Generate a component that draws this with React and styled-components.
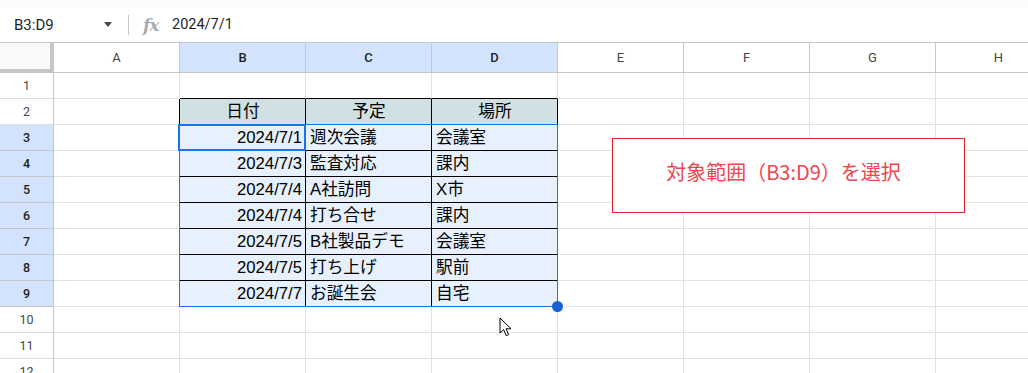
import React from "react";
import styled, { createGlobalStyle } from "styled-components";

const GlobalStyle = createGlobalStyle`
  html, body {
    margin: 0;
    padding: 0;
    background: #fff;
    overflow: hidden;
  }
  * {
    box-sizing: border-box;
  }
`;

const CELL_FONT = `"Liberation Sans", "Noto Sans CJK JP", sans-serif`;
const UI_FONT = `Roboto, "Liberation Sans", sans-serif`;

const Page = styled.div`
  position: relative;
  width: 1028px;
  height: 373px;
  overflow: hidden;
  font-family: ${UI_FONT};
`;

const TopStrip = styled.div`
  height: 7px;
  background: #f9fbfd;
`;

const FormulaBar = styled.div`
  display: flex;
  align-items: center;
  height: 36px;
  border-bottom: 1px solid #c4c7c5;
  background: #fff;
`;

const NameBox = styled.div`
  display: flex;
  align-items: center;
  width: 112px;
  padding-left: 14px;
  font-size: 15px;
  color: #1f1f1f;
`;

const Caret = styled.span`
  margin-left: auto;
  width: 0;
  height: 0;
  border-left: 4.5px solid transparent;
  border-right: 4.5px solid transparent;
  border-top: 5px solid #444746;
`;

const Divider = styled.span`
  margin-left: 16px;
  width: 1px;
  height: 20px;
  background: #c4c7c5;
`;

const FxIcon = styled.span`
  margin-left: 14px;
  width: 18px;
  font-family: "DejaVu Serif", serif;
  font-style: italic;
  font-weight: bold;
  font-size: 17px;
  color: #a8abaf;
  letter-spacing: -1px;
`;

const FormulaText = styled.span`
  margin-left: 11px;
  font-size: 14.5px;
  color: #1f1f1f;
`;

const Grid = styled.div`
  display: grid;
  grid-template-columns: 54px repeat(8, 126px);
  grid-template-rows: 30px repeat(12, 26px);
`;

const Corner = styled.div`
  background: #f8f9fa;
  border-right: 4px solid #c4c7c5;
  border-bottom: 4px solid #c4c7c5;
`;

const ColHead = styled.div`
  display: flex;
  align-items: center;
  justify-content: center;
  background: ${(p) => (p.$selected ? "#d3e3fd" : "#fff")};
  color: ${(p) => (p.$selected ? "#1f1f1f" : "#444746")};
  border-right: 1px solid #c4c7c5;
  border-bottom: 1px solid #c4c7c5;
  font-size: 13px;
  font-weight: ${(p) => (p.$selected ? 500 : 400)};
`;

const RowHead = styled.div`
  display: flex;
  align-items: center;
  justify-content: center;
  background: ${(p) => (p.$selected ? "#d3e3fd" : "#fff")};
  color: ${(p) => (p.$selected ? "#1f1f1f" : "#444746")};
  border-right: 1px solid #c4c7c5;
  border-bottom: 1px solid ${(p) => (p.$selected ? "#c4c7c5" : "#dadce0")};
  font-size: 12.5px;
  font-weight: ${(p) => (p.$selected ? 500 : 400)};
`;

const fills = {
  head: "#d0e0e3",
  sel: "#e7f0fd",
};

const Cell = styled.div`
  overflow: hidden;
  white-space: nowrap;
  padding: 0 3px 0 4px;
  font-family: ${CELL_FONT};
  font-size: 16.7px;
  line-height: 25px;
  color: #000;
  text-align: ${(p) => p.$align || "left"};
  background: ${(p) => fills[p.$fill] || "#fff"};
  border-right: 1px solid ${(p) => p.$right || "#e1e1e1"};
  border-bottom: 1px solid ${(p) => p.$bottom || "#e1e1e1"};
`;

const Selection = styled.div`
  position: absolute;
  left: 179px;
  top: 124px;
  width: 379px;
  height: 183px;
  border: 1px solid #1a73e8;
  pointer-events: none;
`;

const ActiveCell = styled.div`
  position: absolute;
  left: 178px;
  top: 124px;
  width: 128px;
  height: 27px;
  border: 2px solid #1a73e8;
  pointer-events: none;
`;

const FillHandle = styled.div`
  position: absolute;
  left: 552px;
  top: 301px;
  width: 11px;
  height: 11px;
  border-radius: 50%;
  background: #1a5fd6;
`;

const Callout = styled.div`
  position: absolute;
  left: 612px;
  top: 138px;
  width: 353px;
  height: 75px;
  display: flex;
  align-items: center;
  justify-content: center;
  padding: 0 10px 8px 0;
  background: #fff;
  border: 1px solid #e3242b;
  color: #f0444f;
  font-family: "Noto Sans CJK JP", sans-serif;
  font-size: 20px;
`;

const Pointer = styled.svg`
  position: absolute;
  left: 499px;
  top: 317px;
`;

const COLS = ["A", "B", "C", "D", "E", "F", "G", "H"];

const TABLE = {
  2: ["日付", "予定", "場所"],
  3: ["2024/7/1", "週次会議", "会議室"],
  4: ["2024/7/3", "監査対応", "課内"],
  5: ["2024/7/4", "A社訪問", "X市"],
  6: ["2024/7/4", "打ち合せ", "課内"],
  7: ["2024/7/5", "B社製品デモ", "会議室"],
  8: ["2024/7/5", "打ち上げ", "駅前"],
  9: ["2024/7/7", "お誕生会", "自宅"],
};

const inTable = (r, c) => r >= 2 && r <= 9 && c >= 1 && c <= 3;

function renderCell(r, c) {
  const row = TABLE[r];
  const table = inTable(r, c);
  let right, bottom, fill, align, text;
  if (table) {
    right = "#000";
    bottom = "#000";
    text = row[c - 1];
    if (r === 2) {
      fill = "head";
      align = "center";
    } else {
      fill = "sel";
      align = c === 1 ? "right" : "left";
    }
  }
  if (c === 0 && r >= 2 && r <= 9) right = "#000";
  if (r === 1 && c >= 1 && c <= 3) bottom = "#000";
  return (
    <Cell key={`${r}-${c}`} $right={right} $bottom={bottom} $fill={fill} $align={align}>
      {text}
    </Cell>
  );
}

export default function App() {
  const rows = Array.from({ length: 12 }, (_, i) => i + 1);
  return (
    <Page>
      <GlobalStyle />
      <TopStrip />
      <FormulaBar>
        <NameBox>
          B3:D9
          <Caret />
        </NameBox>
        <Divider />
        <FxIcon>fx</FxIcon>
        <FormulaText>2024/7/1</FormulaText>
      </FormulaBar>
      <Grid>
        <Corner />
        {COLS.map((c, i) => (
          <ColHead key={c} $selected={i >= 1 && i <= 3}>
            {c}
          </ColHead>
        ))}
        {rows.map((r) => (
          <React.Fragment key={r}>
            <RowHead $selected={r >= 3 && r <= 9}>{r}</RowHead>
            {COLS.map((_, c) => renderCell(r, c))}
          </React.Fragment>
        ))}
      </Grid>
      <Selection />
      <ActiveCell />
      <FillHandle />
      <Callout>対象範囲（B3:D9）を選択</Callout>
      <Pointer width="14" height="21" viewBox="0 0 14 21">
        <path
          d="M1 1 L1 16 L4.6 12.6 L7.2 18.6 L9.6 17.6 L7 11.8 L12 11.8 Z"
          fill="#fff"
          stroke="#000"
          strokeWidth="1"
          strokeLinejoin="round"
        />
      </Pointer>
    </Page>
  );
}
